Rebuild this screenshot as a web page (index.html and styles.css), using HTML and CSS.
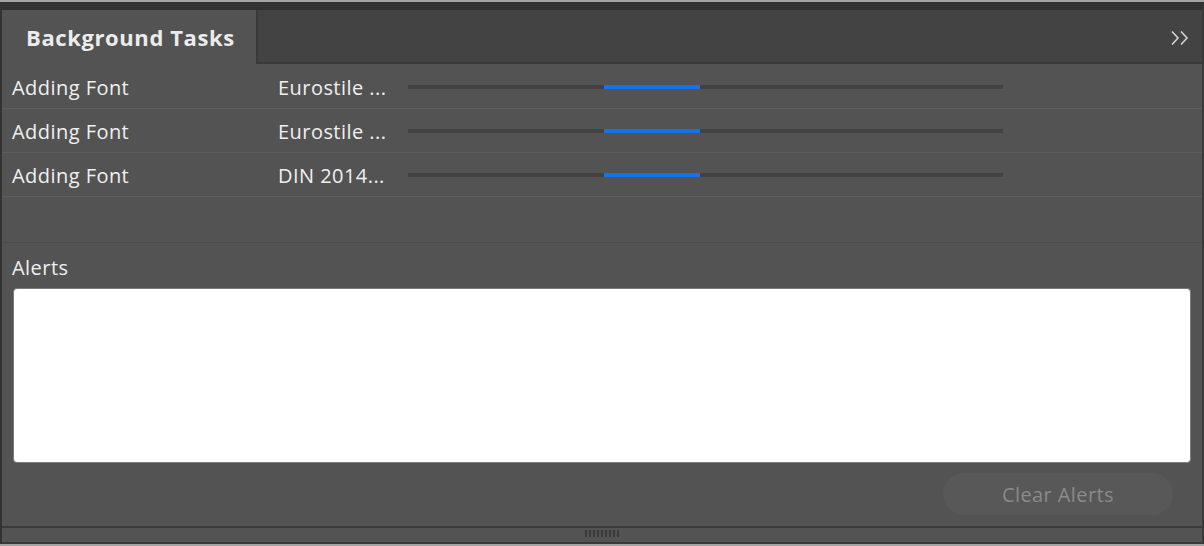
FILE: index.html
```html
<!DOCTYPE html>
<html>
<head>
<meta charset="utf-8">
<link rel="stylesheet" href="styles.css">
</head>
<body>
<div class="window">
  <div class="topline"></div>
  <div class="panel">
    <div class="tabbar">
      <div class="tab">Background Tasks</div>
      <div class="tabrest">
        <svg class="chev" width="20" height="16" viewBox="0 0 20 16"><path d="M2 1.5 L8 8 L2 14.5 M11 1.5 L17 8 L11 14.5" fill="none" stroke="#d4d4d4" stroke-width="1.6"/></svg>
      </div>
    </div>
    <div class="tasks">
      <div class="row">
        <span class="label">Adding Font</span>
        <span class="file">Eurostile ...</span>
        <div class="track"><div class="bar"></div></div>
      </div>
      <div class="row">
        <span class="label">Adding Font</span>
        <span class="file">Eurostile ...</span>
        <div class="track"><div class="bar"></div></div>
      </div>
      <div class="row">
        <span class="label">Adding Font</span>
        <span class="file">DIN 2014...</span>
        <div class="track"><div class="bar"></div></div>
      </div>
      <div class="row empty"></div>
    </div>
    <div class="alerts">
      <div class="alerts-title">Alerts</div>
      <div class="alertbox"></div>
      <div class="actions"><button class="clear">Clear Alerts</button></div>
    </div>
    <div class="footer">
      <div class="grip"><i></i><i></i><i></i><i></i><i></i><i></i><i></i><i></i><i></i></div>
    </div>
  </div>
  <div class="bottomline"></div>
</div>
</body>
</html>
```
FILE: styles.css
```css
* { box-sizing: border-box; }
html, body { margin: 0; padding: 0; }
body {
  width: 1204px;
  height: 546px;
  overflow: hidden;
  background: #535353;
  font-family: "Open Sans", "Liberation Sans", sans-serif;
  color: #ececec;
}
.window {
  width: 1204px;
  height: 546px;
  display: flex;
  flex-direction: column;
}
.topline { height: 2px; background: #a3a3a3; }
.bottomline { height: 2px; background: #a3a3a3; }
.panel {
  flex: 1;
  display: flex;
  flex-direction: column;
  background: #535353;
  border-left: 2px solid #333333;
  border-right: 2px solid #393939;
  border-bottom: 2px solid #393939;
  border-top: 8px solid #323232;
}
.tabbar {
  height: 54px;
  display: flex;
}
.tab {
  width: 254px;
  background: #535353;
  font-weight: 700;
  font-size: 22px;
  line-height: 30px;
  padding-left: 24px;
  padding-top: 12px;
  letter-spacing: 0.6px;
  color: #ececec;
}
.tabrest {
  flex: 1;
  background: #434343;
  border-left: 2px solid #393939;
  border-bottom: 2px solid #393939;
  display: flex;
  justify-content: flex-end;
  padding-right: 12px;
  padding-top: 20px;
}
.chev { display: block; }
.tasks { display: flex; flex-direction: column; }
.row {
  height: 44px;
  border-bottom: 1px solid #5f5f5f;
  display: flex;
  align-items: center;
  font-size: 20px;
  font-weight: 500;
  letter-spacing: 0.45px;
  padding-left: 10px;
  padding-top: 2px;
  color: #f0f0f0;
}
.row:first-child { height: 45px; padding-top: 3px; }
.row.empty { height: 46px; border-bottom: 1px solid #4b4b4b; }
.label { width: 266px; }
.file { width: 130px; }
.track {
  width: 595px;
  height: 4px;
  background: #424242;
  position: relative;
  margin-top: -1px;
}
.bar {
  position: absolute;
  left: 196px;
  width: 96px;
  top: 0;
  height: 4px;
  background: #1473e6;
}
.alerts {
  flex: 1;
  display: flex;
  flex-direction: column;
  padding: 0 11px 0 11px;
}
.alerts-title {
  font-size: 20px;
  font-weight: 500;
  letter-spacing: 0.45px;
  padding-top: 11px;
  margin-left: -1px;
  height: 45px;
  color: #f0f0f0;
}
.alertbox {
  height: 175px;
  background: #ffffff;
  border: 1px solid #7b7b7b;
  border-radius: 4px;
}
.actions {
  display: flex;
  justify-content: flex-end;
  padding-top: 10px;
  padding-right: 18px;
}
.clear {
  width: 230px;
  height: 42px;
  border: none;
  border-radius: 21px;
  background: #585858;
  color: #8a8a8a;
  font-family: "Open Sans", "Liberation Sans", sans-serif;
  font-size: 20px;
  font-weight: 500;
  letter-spacing: 0.4px;
  padding: 0;
}
.footer {
  margin-top: auto;
  height: 16px;
  border-top: 2px solid #3b3b3b;
  display: flex;
  justify-content: center;
}
.grip {
  display: flex;
  gap: 2px;
  padding-top: 2px;
  height: 10px;
}
.grip i {
  display: block;
  width: 2px;
  height: 7px;
  background: #3a3a3a;
}
```
